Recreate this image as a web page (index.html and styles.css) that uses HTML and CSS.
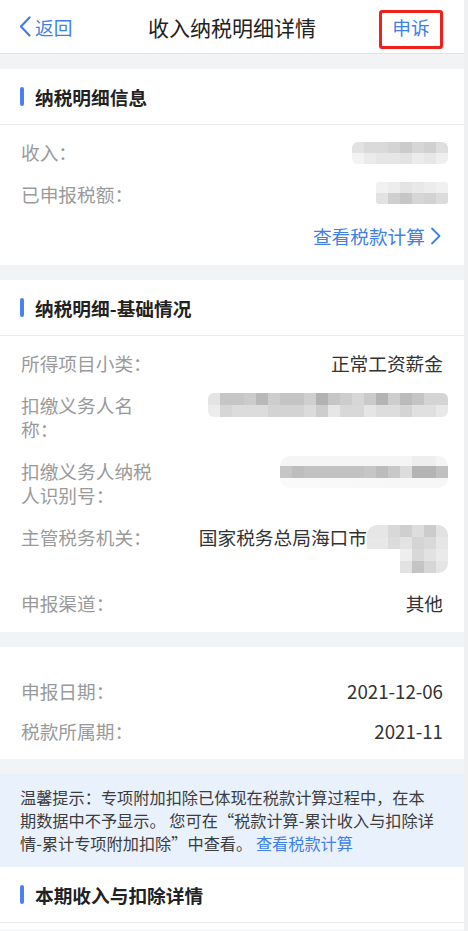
FILE: index.html
```html
<!DOCTYPE html>
<html lang="zh-CN">
<head>
    <meta charset="UTF-8">
    <meta name="viewport" content="width=device-width, initial-scale=1.0">
    <title>收入纳税明细详情</title>
    <link rel="stylesheet" href="styles.css">
</head>
<body>
    <div class="page">
        <header class="navbar">
            <a class="nav-back" href="#">
                <svg class="back-icon" width="12" height="21" viewBox="0 0 12 21"><path d="M10.5 1.5 L2 10.5 L10.5 19.5" fill="none" stroke="currentColor" stroke-width="2.2" stroke-linecap="round" stroke-linejoin="round"/></svg>
                返回
            </a>
            <h1 class="nav-title">收入纳税明细详情</h1>
            <div class="nav-right">
                <a class="nav-appeal" href="#">申诉</a>
            </div>
        </header>

        <!-- 纳税明细信息 -->
        <section class="card">
            <h2 class="card-title">纳税明细信息</h2>
            <div class="card-body">
                <div class="row">
                    <span class="label">收入：</span>
                    <span class="value"><i class="mosaic mosaic-income"></i></span>
                </div>
                <div class="row">
                    <span class="label">已申报税额：</span>
                    <span class="value"><i class="mosaic mosaic-tax"></i></span>
                </div>
                <a class="more-link" href="#">
                    查看税款计算
                    <svg width="11" height="18" viewBox="0 0 11 18"><path d="M2 1.5 L9.5 9 L2 16.5" fill="none" stroke="currentColor" stroke-width="1.8" stroke-linecap="round" stroke-linejoin="round"/></svg>
                </a>
            </div>
        </section>

        <!-- 基础情况 -->
        <section class="card">
            <h2 class="card-title">纳税明细-基础情况</h2>
            <div class="card-body">
                <div class="row">
                    <span class="label">所得项目小类：</span>
                    <span class="value">正常工资薪金</span>
                </div>
                <div class="row">
                    <span class="label">扣缴义务人名称：</span>
                    <span class="value"><i class="mosaic mosaic-name"></i></span>
                </div>
                <div class="row">
                    <span class="label">扣缴义务人纳税人识别号：</span>
                    <span class="value"><i class="mosaic mosaic-id"></i></span>
                </div>
                <div class="row">
                    <span class="label">主管税务机关：</span>
                    <span class="value value-org">国家税务总局海口市<i class="mosaic mosaic-org"></i></span>
                </div>
                <div class="row">
                    <span class="label">申报渠道：</span>
                    <span class="value">其他</span>
                </div>
            </div>
        </section>

        <section class="card">
            <div class="card-body card-body-plain">
                <div class="row">
                    <span class="label">申报日期：</span>
                    <span class="value">2021-12-06</span>
                </div>
                <div class="row">
                    <span class="label">税款所属期：</span>
                    <span class="value">2021-11</span>
                </div>
            </div>
        </section>

        <div class="tip">
            <p>温馨提示：专项附加扣除已体现在税款计算过程中，在本期数据中不予显示。 您可在“税款计算-累计收入与扣除详情-累计专项附加扣除”中查看。 <a href="#">查看税款计算</a></p>
        </div>

        <section class="card card-last">
            <h2 class="card-title">本期收入与扣除详情</h2>
        </section>
    </div>
</body>
</html>
```

FILE: styles.css
```css
:root {
    --blue: #3f7fe8;
    --bar-blue: #4a80f0;
    --bg-gray: #f2f3f5;
    --line: #ebebeb;
    --label: #9a9a9a;
    --text: #333;
}

* {
    margin: 0;
    padding: 0;
    box-sizing: border-box;
}

body {
    font-family: "Noto Sans CJK SC", "Noto Sans", sans-serif;
    background: #eff0f2;
    color: var(--text);
    font-size: 18.7px;
}

a {
    text-decoration: none;
}

.page {
    width: 464px;
    min-height: 931px;
    background: var(--bg-gray);
}

/* Navigation */
.navbar {
    display: grid;
    grid-template-columns: 1fr auto 1fr;
    align-items: center;
    height: 54px;
    background: #fff;
    border-bottom: 1px solid #e2e2e2;
    margin-bottom: 15px;
}

.nav-back {
    display: flex;
    align-items: center;
    gap: 4px;
    padding-left: 19px;
    color: var(--blue);
    line-height: 24px;
}

.nav-title {
    font-size: 21px;
    font-weight: normal;
    color: #222;
    line-height: 28px;
}

.nav-right {
    display: flex;
    justify-content: flex-end;
    align-self: start;
    padding-right: 21px;
    margin-top: 10px;
}

.nav-appeal {
    display: block;
    width: 64px;
    height: 39px;
    border: 3px solid #f0201a;
    border-radius: 3px;
    padding-top: 2px;
    text-align: center;
    line-height: 24px;
    color: var(--blue);
}

/* Cards */
.card {
    background: #fff;
    margin-bottom: 15px;
}

.card-title {
    display: flex;
    align-items: center;
    height: 56px;
    padding-left: 20px;
    border-bottom: 1px solid var(--line);
    font-size: 18.7px;
    font-weight: 600;
    color: #222;
}

.card-title::before {
    content: '';
    width: 4px;
    height: 19px;
    border-radius: 2px;
    background: var(--bar-blue);
    margin-right: 11px;
}

.card-body {
    display: flex;
    flex-direction: column;
    gap: 18px;
    padding: 15px 21px 17px 21px;
}

.card-body-plain {
    gap: 16px;
    padding-top: 32px;
    padding-bottom: 16px;
}

.row {
    display: flex;
    justify-content: space-between;
    align-items: flex-start;
    line-height: 24px;
}

.label {
    width: 136px;
    flex-shrink: 0;
    color: var(--label);
}

.value {
    text-align: right;
    color: var(--text);
}

.value-org {
    display: flex;
    align-items: flex-start;
}

.more-link {
    display: flex;
    align-items: center;
    justify-content: flex-end;
    gap: 5px;
    color: var(--blue);
    line-height: 24px;
    padding-right: 2px;
}

/* Blurred (mosaic) values */
.mosaic {
    display: block;
    margin-right: -5px;
    border-radius: 6px;
    background-repeat: no-repeat;
}

.mosaic-income {
    width: 96px;
    height: 22px;
    margin-top: 2px;
    background-image:
        linear-gradient(90deg, #e2e2e2 0 12px, #dadada 12px 36px, #d4d4d4 36px 48px, #cbcbcb 48px 60px, #d6d6d6 60px 72px, #d0d0d0 72px 84px, #dedede 84px),
        linear-gradient(90deg, #f3f3f3 0 12px, #ebebeb 12px 24px, #e6e6e6 24px 48px, #e3e3e3 48px 60px, #ececec 60px 72px, #e7e7e7 72px 84px, #efefef 84px);
    background-size: 100% 11px, 100% 11px;
    background-position: 0 0, 0 11px;
}

.mosaic-tax {
    width: 72px;
    height: 22px;
    border-radius: 3px;
    background-image:
        linear-gradient(90deg, #f1f1f1 0 12px, #ededed 12px 24px, #e4e4e4 24px 36px, #e8e8e8 36px 48px, #ececec 48px 60px, #f0f0f0 60px),
        linear-gradient(90deg, #e2e2e2 0 12px, #cfcfcf 12px 24px, #c6c6c6 24px 36px, #d6d6d6 36px 48px, #d2d2d2 48px 60px, #dcdcdc 60px);
    background-size: 100% 11px, 100% 11px;
    background-position: 0 0, 0 11px;
}

.mosaic-name {
    width: 240px;
    height: 24px;
    background-image:
        linear-gradient(90deg, #e4e4e4 0 12px, #c6c6c6 12px 36px, #cbcbcb 36px 48px, #b8b8b8 48px 60px, #cdcdcd 60px 72px, #c4c4c4 72px 96px, #cfcfcf 96px 108px, #b2b2b2 108px 120px, #c6c6c6 120px 132px, #cdcdcd 132px 144px, #d6d6d6 144px 156px, #cacaca 156px 168px, #b4b4b4 168px 180px, #cdcdcd 180px 192px, #bbbbbb 192px 204px, #c4c4c4 204px 216px, #d4d4d4 216px),
        linear-gradient(90deg, #ececec 0 12px, #d6d6d6 12px 24px, #dcdcdc 24px 60px, #d3d3d3 60px 96px, #dbdbdb 96px 108px, #cdcdcd 108px 120px, #e6e6e6 120px 132px, #d8d8d8 132px 156px, #e5e5e5 156px 168px, #dddddd 168px 192px, #d4d4d4 192px 204px, #e0e0e0 204px 228px, #e8e8e8 228px);
    background-size: 100% 12px, 100% 12px;
    background-position: 0 0, 0 12px;
}

.mosaic-id {
    width: 168px;
    height: 32px;
    margin-top: -3px;
    border-radius: 10px;
    background-image:
        linear-gradient(90deg, #f5f5f5 0 132px, #eeeeee 132px 156px, #f4f4f4 156px),
        linear-gradient(90deg, #c6c6c6 0 12px, #bdbdbd 12px 24px, #c2c2c2 24px 84px, #c6c6c6 84px 96px, #bcbcbc 96px 108px, #c8c8c8 108px 120px, #dcdcdc 120px 132px, #b4b4b4 132px 156px, #c0c0c0 156px 168px, #d8d8d8 168px),
        linear-gradient(90deg, #fafafa 0, #f6f6f6 100%);
    background-size: 100% 10px, 100% 12px, 100% 10px;
    background-position: 0 0, 0 10px, 0 22px;
}

.mosaic-org {
    width: 81px;
    height: 48px;
    border-radius: 10px;
    background-image:
        linear-gradient(90deg, #e6e6e6 0 21px, #d8d8d8 21px 33px, #cfcfcf 33px 45px, #dddddd 45px 57px, #cccccc 57px 69px, #e2e2e2 69px),
        linear-gradient(90deg, #e8e8e8 0 21px, #dcdcdc 21px 33px, #e3e3e3 33px 45px, #d4d4d4 45px 57px, #d9d9d9 57px 69px, #e6e6e6 69px),
        linear-gradient(90deg, #eeeeee 0 12px, #d8d8d8 12px 24px, #e2e2e2 24px 36px, #eaeaea 36px),
        linear-gradient(90deg, #e2e2e2 0 12px, #c4c4c4 12px 24px, #d6d6d6 24px 36px, #e4e4e4 36px);
    background-size: 100% 12px, 100% 12px, 48px 12px, 48px 12px;
    background-position: 0 0, 0 12px, right 0 top 24px, right 0 top 36px;
}

/* Tip */
.tip {
    background: #e9f1fd;
    padding: 12px 24px 12px 20px;
    font-size: 16.2px;
    line-height: 23px;
    color: #3c3c3c;
}

.tip a {
    color: var(--blue);
}

.card-last {
    margin-bottom: 0;
    min-height: 63px;
}
```
